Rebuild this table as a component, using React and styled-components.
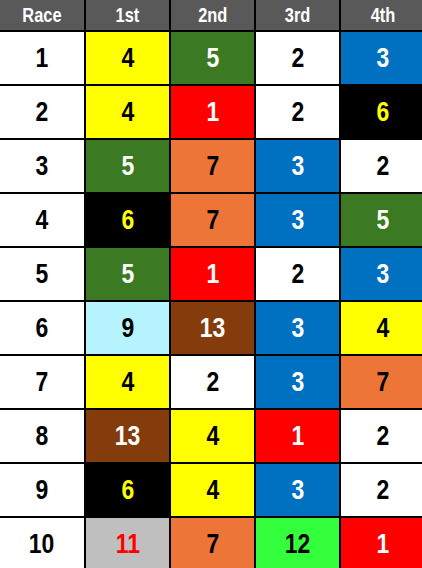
import React from "react";
import styled, { createGlobalStyle } from "styled-components";

const Global = createGlobalStyle`
  html, body { margin: 0; padding: 0; background: #000; }
  body { font-family: "Liberation Sans", Arial, sans-serif; overflow: hidden; }
`;

const SWATCH = {
  1: { bg: "#ff0000", fg: "#ffffff" },
  2: { bg: "#ffffff", fg: "#000000" },
  3: { bg: "#0070c0", fg: "#ffffff" },
  4: { bg: "#ffff00", fg: "#000000" },
  5: { bg: "#3b7a22", fg: "#ffffff" },
  6: { bg: "#000000", fg: "#ffff00" },
  7: { bg: "#ed7537", fg: "#000000" },
  9: { bg: "#b5f4fe", fg: "#000000" },
  11: { bg: "#bfbfbf", fg: "#ff0000" },
  12: { bg: "#33ff3c", fg: "#000000" },
  13: { bg: "#843c0c", fg: "#ffffff" },
};

const ROWS = [
  [4, 5, 2, 3],
  [4, 1, 2, 6],
  [5, 7, 3, 2],
  [6, 7, 3, 5],
  [5, 1, 2, 3],
  [9, 13, 3, 4],
  [4, 2, 3, 7],
  [13, 4, 1, 2],
  [6, 4, 3, 2],
  [11, 7, 12, 1],
];

const HEADERS = ["Race", "1st", "2nd", "3rd", "4th"];

const Table = styled.div`
  display: grid;
  grid-template-columns: 84px repeat(4, 83px);
  grid-template-rows: 30px repeat(10, 52px);
  gap: 2px;
  background: #000;
  width: 424px;
  height: 570px;
`;

const HeadCell = styled.div`
  display: flex;
  align-items: center;
  justify-content: center;
  background: #595959;
  color: #ffffff;
  font-weight: 700;
  font-size: 20px;
`;

const Cell = styled.div`
  display: flex;
  align-items: center;
  justify-content: center;
  background: ${(p) => p.$bg};
  color: ${(p) => p.$fg};
  font-weight: 700;
  font-size: 28px;
`;

const Narrow = styled.span`
  display: inline-block;
  transform: scaleX(0.82);
  line-height: 1;
`;

export default function App() {
  return (
    <>
      <Global />
      <Table>
        {HEADERS.map((h) => (
          <HeadCell key={h}>
            <Narrow>{h}</Narrow>
          </HeadCell>
        ))}
        {ROWS.map((row, i) => (
          <React.Fragment key={i}>
            <Cell $bg="#ffffff" $fg="#000000">
              <Narrow>{i + 1}</Narrow>
            </Cell>
            {row.map((n, j) => (
              <Cell key={j} $bg={SWATCH[n].bg} $fg={SWATCH[n].fg}>
                <Narrow>{n}</Narrow>
              </Cell>
            ))}
          </React.Fragment>
        ))}
      </Table>
    </>
  );
}
